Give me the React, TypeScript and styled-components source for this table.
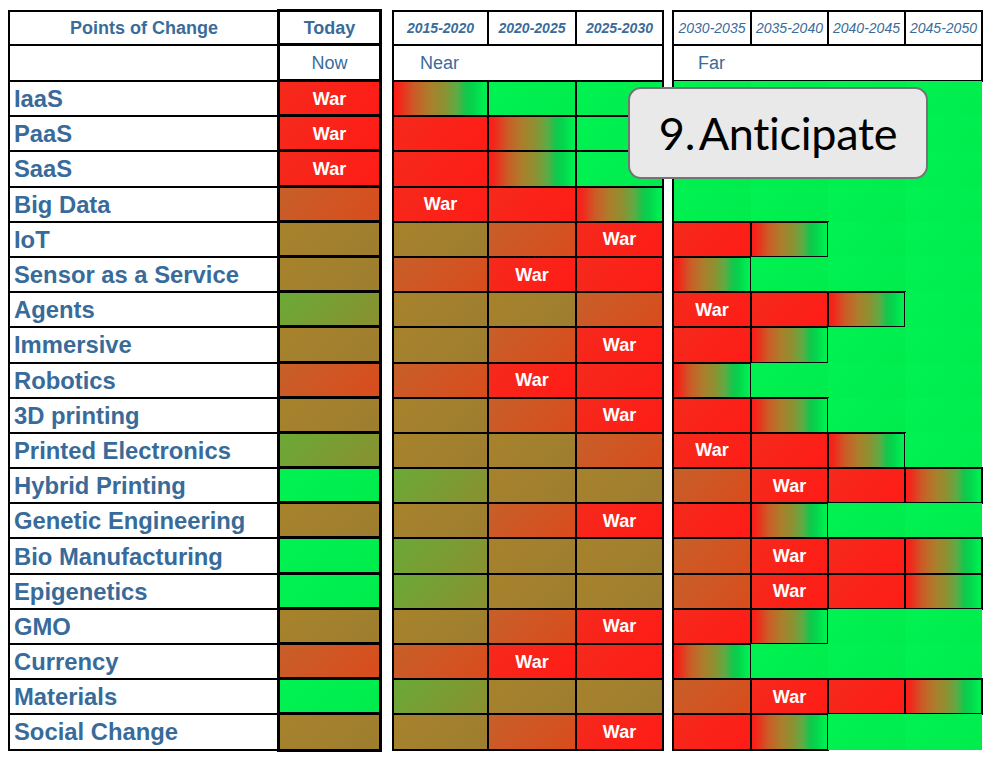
import React from 'react';
import styled, {createGlobalStyle, css} from 'styled-components';

type Tone = 'R' | 'O' | 'B' | 'G' | 'N' | 'T';

interface RowData {
  label: string;
  today: string;
  near: string;
  far: string;
}

const rows: RowData[] = [
  {label: 'IaaS', today: 'R*', near: 'T N N', far: 'N N N N'},
  {label: 'PaaS', today: 'R*', near: 'R T N', far: 'N N N N'},
  {label: 'SaaS', today: 'R*', near: 'R T N', far: 'N N N N'},
  {label: 'Big Data', today: 'O', near: 'R* R T', far: 'N N N N'},
  {label: 'IoT', today: 'B', near: 'B O R*', far: 'R T N N'},
  {label: 'Sensor as a Service', today: 'B', near: 'O R* R', far: 'T N N N'},
  {label: 'Agents', today: 'G', near: 'B B O', far: 'R* R T N'},
  {label: 'Immersive', today: 'B', near: 'B O R*', far: 'R T N N'},
  {label: 'Robotics', today: 'O', near: 'O R* R', far: 'T N N N'},
  {label: '3D printing', today: 'B', near: 'B O R*', far: 'R T N N'},
  {label: 'Printed Electronics', today: 'G', near: 'B B O', far: 'R* R T N'},
  {label: 'Hybrid Printing', today: 'N', near: 'G B B', far: 'O R* R T'},
  {label: 'Genetic Engineering', today: 'B', near: 'B O R*', far: 'R T N N'},
  {label: 'Bio Manufacturing', today: 'N', near: 'G B B', far: 'O R* R T'},
  {label: 'Epigenetics', today: 'N', near: 'G B B', far: 'O R* R T'},
  {label: 'GMO', today: 'B', near: 'B O R*', far: 'R T N N'},
  {label: 'Currency', today: 'O', near: 'O R* R', far: 'T N N N'},
  {label: 'Materials', today: 'N', near: 'G B B', far: 'O R* R T'},
  {label: 'Social Change', today: 'B', near: 'B O R*', far: 'R T N N'},
];

const nearYears = ['2015-2020', '2020-2025', '2025-2030'];
const farYears = ['2030-2035', '2035-2040', '2040-2045', '2045-2050'];

// "R*" = red cell marked War
const parse = (token: string) => ({
  tone: token.charAt(0) as Tone,
  war: token.endsWith('*'),
});

const tones: Record<Tone, string> = {
  R: 'linear-gradient(135deg, #f52a1c 0%, #ff1b16 100%)',
  O: 'linear-gradient(135deg, #c6602a 0%, #da4b1c 100%)',
  B: 'linear-gradient(135deg, #a7822c 0%, #9d7e2f 100%)',
  G: 'linear-gradient(135deg, #69aa37 0%, #8b8f30 100%)',
  N: 'linear-gradient(135deg, #00f252 0%, #00ec4d 100%)',
  T: 'linear-gradient(90deg, #ff1a16 0%, #f2271b 7%, #cc5b27 22%, #a9802c 40%, #8c9132 54%, #5eab45 67%, #12c74b 77%, #03d64d 85%, #00ef50 96%, #00f050 100%)',
};

const App = () => {
  return (
    <>
      <GlobalStyle />
      <Board>
        <Table $cols="270px 101px" $gap={0}>
          <HeadCell>
            <PointsTitle>Points of Change</PointsTitle>
          </HeadCell>
          <HeadCell $thick>
            <PointsTitle>Today</PointsTitle>
          </HeadCell>
          <HeadCell />
          <HeadCell $thick>
            <Period $center>Now</Period>
          </HeadCell>
          {rows.map((row) => {
            const today = parse(row.today);
            return (
              <React.Fragment key={row.label}>
                <LabelCell>{row.label}</LabelCell>
                <Cell $tone={today.tone} $thick>
                  {today.war && <War>War</War>}
                </Cell>
              </React.Fragment>
            );
          })}
        </Table>

        <Table $cols="95px 88px 87px" $gap={13}>
          {nearYears.map((year) => (
            <HeadCell key={year}>
              <Year $bold>{year}</Year>
            </HeadCell>
          ))}
          <HeadCell $span={3}>
            <Period $inset={27}>Near</Period>
          </HeadCell>
          {rows.map((row) =>
            row.near.split(' ').map((token, i) => {
              const cell = parse(token);
              return (
                <Cell key={row.label + i} $tone={cell.tone}>
                  {cell.war && <War>War</War>}
                </Cell>
              );
            })
          )}
        </Table>

        <Table $cols="78px 77px 77px 77px" $gap={10}>
          {farYears.map((year) => (
            <HeadCell key={year}>
              <Year>{year}</Year>
            </HeadCell>
          ))}
          <HeadCell $span={4}>
            <Period $inset={25}>Far</Period>
          </HeadCell>
          {rows.map((row) =>
            row.far.split(' ').map((token, i) => {
              const cell = parse(token);
              const open = cell.tone === 'N';
              return (
                <Cell
                  key={row.label + i}
                  $tone={cell.tone}
                  $open={open}
                  $edge={open && i === 0}
                >
                  {cell.war && <War>War</War>}
                </Cell>
              );
            })
          )}
        </Table>

        <Callout>9. Anticipate</Callout>
      </Board>
    </>
  );
};

export default App;

const GlobalStyle = createGlobalStyle`
  html, body {
    margin: 0;
    padding: 0;
    background: #ffffff;
  }

  body {
    font-family: "Liberation Sans", Arial, sans-serif;
  }
`;

const Board = styled.div`
  position: relative;
  display: flex;
  align-items: flex-start;
  padding: 11px 0 0 9px;
  width: 994px;
  height: 757px;
  box-sizing: border-box;
`;

const Table = styled.div<{$cols: string; $gap: number}>`
  display: grid;
  grid-template-columns: ${(p) => p.$cols};
  grid-template-rows: 34px 36px repeat(19, 35.2px);
  margin-left: ${(p) => p.$gap}px;
`;

const line = (thick?: boolean) =>
  thick
    ? css`
        outline: 3px solid #000;
        outline-offset: -1px;
      `
    : css`
        outline: 2px solid #000;
        outline-offset: -1px;
      `;

const HeadCell = styled.div<{$thick?: boolean; $span?: number}>`
  display: flex;
  align-items: center;
  justify-content: center;
  background: #ffffff;
  grid-column: span ${(p) => p.$span || 1};
  ${(p) => line(p.$thick)}
`;

const PointsTitle = styled.span`
  font-size: 18px;
  font-weight: bold;
  color: #3a6c9b;
  padding-top: 1px;
`;

const Year = styled.span<{$bold?: boolean}>`
  font-size: 14px;
  font-style: italic;
  font-weight: ${(p) => (p.$bold ? 'bold' : 'normal')};
  color: #3a6c9b;
  white-space: nowrap;
`;

const Period = styled.span<{$center?: boolean; $inset?: number}>`
  flex: 1;
  font-size: 18px;
  color: #3a6c9b;
  text-align: ${(p) => (p.$center ? 'center' : 'left')};
  padding: 1px 0 0 ${(p) => p.$inset || 0}px;
`;

const LabelCell = styled.div`
  display: flex;
  align-items: center;
  padding: 1px 0 0 5px;
  background: #ffffff;
  font-size: 23.8px;
  font-weight: bold;
  color: #386b9a;
  white-space: nowrap;
  ${line()}
`;

const Cell = styled.div<{$tone: Tone; $thick?: boolean; $open?: boolean; $edge?: boolean}>`
  display: flex;
  align-items: center;
  justify-content: center;
  padding-top: 1px;
  background: ${(p) => tones[p.$tone]};
  ${(p) => !p.$open && line(p.$thick)}
  ${(p) =>
    p.$edge &&
    css`
      box-shadow: -1px 0 0 #000, inset 1px 0 0 #000;
    `}
`;

const War = styled.span`
  font-size: 18px;
  font-weight: bold;
  color: #ffffff;
`;

const Callout = styled.div`
  position: absolute;
  left: 628px;
  top: 87px;
  width: 300px;
  height: 92px;
  box-sizing: border-box;
  z-index: 5;
  display: flex;
  align-items: center;
  justify-content: center;
  background: #e9e9e9;
  border: 2px solid #747474;
  border-radius: 13px;
  font-family: Lato, "Open Sans", sans-serif;
  font-size: 45px;
  color: #000000;
  letter-spacing: -0.3px;
  word-spacing: -6px;
`;
